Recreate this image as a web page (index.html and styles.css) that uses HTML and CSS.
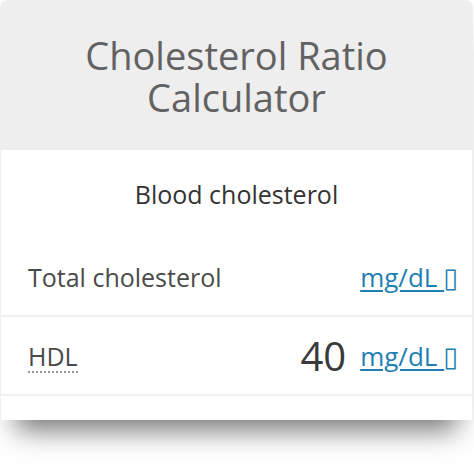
FILE: index.html
```html
<!DOCTYPE html>
<html>
<head>
<meta charset="utf-8">
<link rel="stylesheet" href="styles.css">
</head>
<body>
<div class="card">
  <div class="card-header">
    <h1 class="title">Cholesterol Ratio<br>Calculator</h1>
  </div>
  <div class="card-body">
    <div class="section-title">Blood cholesterol</div>
    <div class="row">
      <span class="label">Total cholesterol</span>
      <span class="value-group">
        <span class="value"></span>
        <a class="unit" href="#">mg/dL <span class="caret">▯</span></a>
      </span>
    </div>
    <div class="row">
      <span class="label label-dotted">HDL</span>
      <span class="value-group">
        <span class="value">40</span>
        <a class="unit" href="#">mg/dL <span class="caret">▯</span></a>
      </span>
    </div>
    <div class="row row-last"></div>
  </div>
</div>
</body>
</html>
```

FILE: styles.css
```css
html, body {
  margin: 0;
  padding: 0;
  background: #ffffff;
}

body {
  font-family: "Open Sans", "DejaVu Sans", sans-serif;
  width: 474px;
  height: 474px;
  overflow: hidden;
}

.card {
  margin: 0 1px 0 0;
  width: 473px;
  border-radius: 8px 8px 0 0;
  box-shadow: 0 26px 26px -16px rgba(0, 0, 0, 0.55);
  background: #ffffff;
}

.card-header {
  background: #eeeeee;
  height: 150px;
  box-sizing: border-box;
  padding-top: 34px;
  border-radius: 8px 8px 0 0;
}

.title {
  margin: 0;
  font-weight: 400;
  font-size: 38px;
  line-height: 42px;
  color: #626262;
  text-align: center;
}

.card-body {
  height: 270px;
  overflow: hidden;
  border-left: 1px solid #efefef;
  border-right: 1px solid #efefef;
}

.section-title {
  height: 88px;
  display: flex;
  align-items: center;
  justify-content: center;
  font-size: 25px;
  color: #333333;
}

.row {
  height: 77px;
  border-bottom: 2px solid #f0f0f0;
  display: flex;
  align-items: center;
  padding: 0 14px 0 27px;
}

.label {
  font-size: 25px;
  line-height: 34px;
  color: #4a4a4a;
}

.label-dotted {
  border-bottom: 2px dotted #9a9a9a;
  line-height: 30px;
  padding-top: 2px;
}

.value-group {
  margin-left: auto;
  display: flex;
  align-items: center;
  gap: 14px;
}

.value {
  font-size: 40px;
  line-height: 50px;
  color: #3a3a3a;
}

.unit {
  font-size: 26px;
  line-height: 34px;
  color: #1f7fb2;
  text-decoration: underline;
  text-underline-offset: 3px;
  text-decoration-thickness: 2px;
}

.caret {
  font-family: "DejaVu Sans", sans-serif;
  font-size: 27px;
  line-height: 20px;
  margin-left: -1px;
}
```
